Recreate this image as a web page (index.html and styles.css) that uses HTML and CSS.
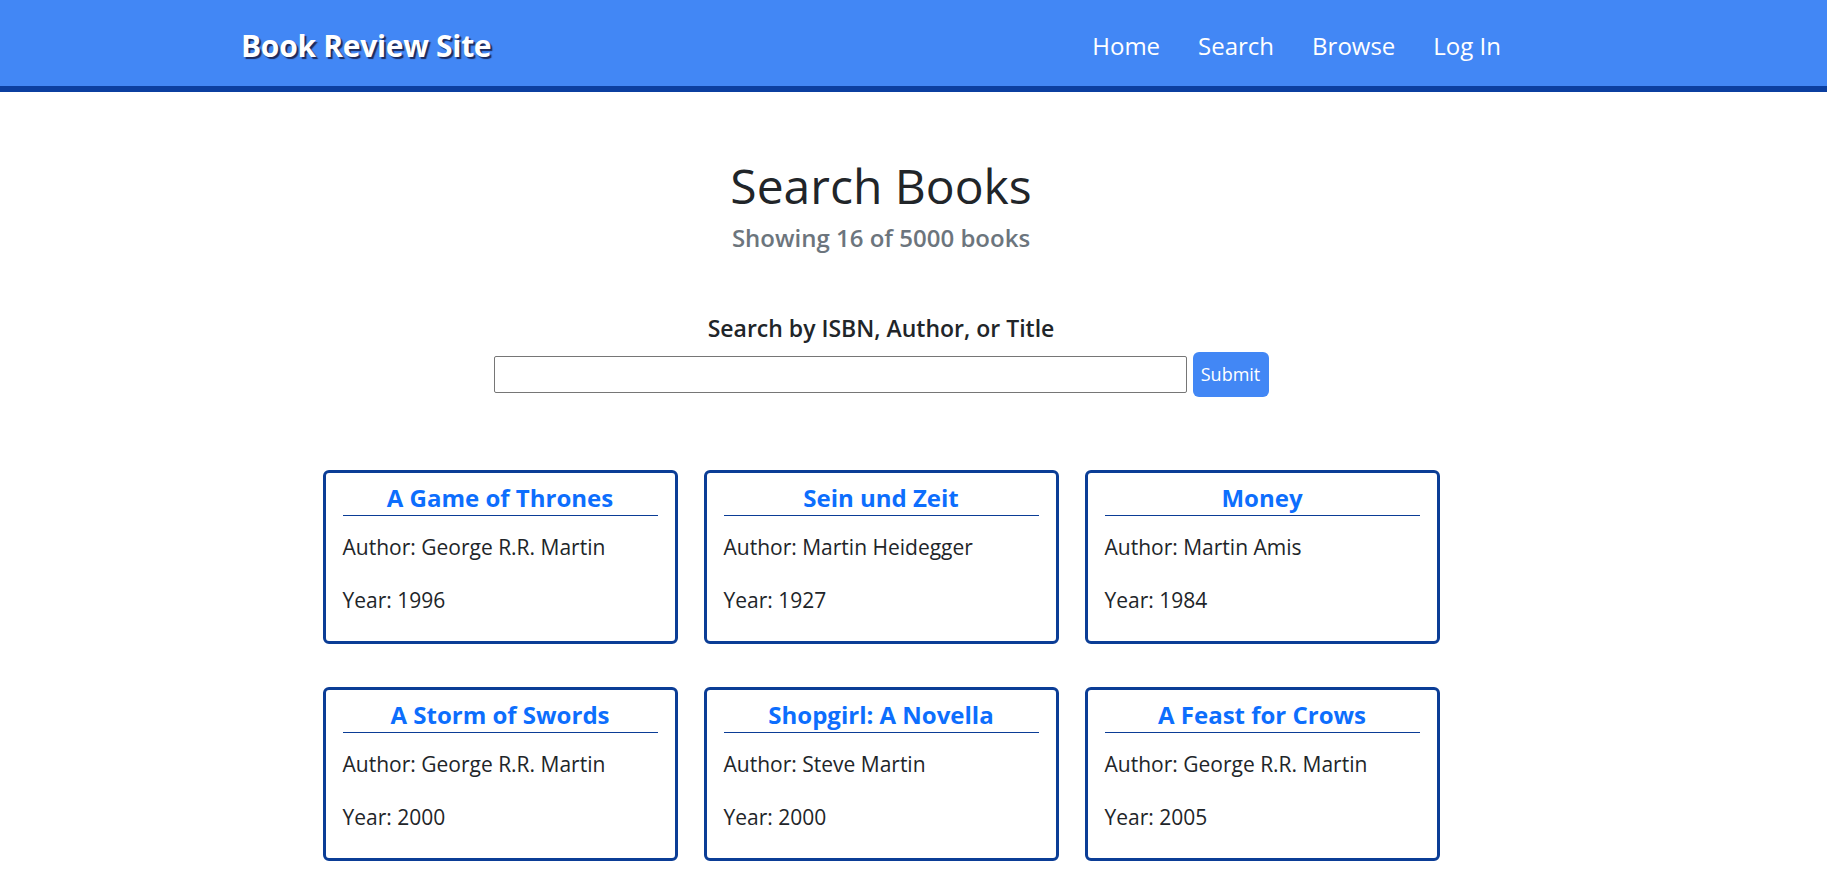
FILE: index.html
```html
<!DOCTYPE html>
<html lang="en">
<head>
<meta charset="utf-8">
<title>Search Books - Book Review Site</title>
<link rel="stylesheet" href="styles.css">
</head>
<body>
<header class="navbar">
  <div class="container nav-inner">
    <a class="brand" href="#">Book Review Site</a>
    <nav class="nav-links">
      <a href="#">Home</a>
      <a href="#">Search</a>
      <a href="#">Browse</a>
      <a href="#">Log In</a>
    </nav>
  </div>
</header>
<main class="container main">
  <h1 class="title">Search Books</h1>
  <p class="subtitle">Showing 16 of 5000 books</p>
  <form class="search-form">
    <label class="search-label" for="q">Search by ISBN, Author, or Title</label>
    <div class="search-row">
      <input id="q" class="search-input" type="text">
      <button class="btn-submit" type="button">Submit</button>
    </div>
  </form>
  <section class="book-grid">
    <article class="book-card">
      <h2 class="book-title"><a href="#">A Game of Thrones</a></h2>
      <p class="book-meta">Author: George R.R. Martin</p>
      <p class="book-meta">Year: 1996</p>
    </article>
    <article class="book-card">
      <h2 class="book-title"><a href="#">Sein und Zeit</a></h2>
      <p class="book-meta">Author: Martin Heidegger</p>
      <p class="book-meta">Year: 1927</p>
    </article>
    <article class="book-card">
      <h2 class="book-title"><a href="#">Money</a></h2>
      <p class="book-meta">Author: Martin Amis</p>
      <p class="book-meta">Year: 1984</p>
    </article>
    <article class="book-card">
      <h2 class="book-title"><a href="#">A Storm of Swords</a></h2>
      <p class="book-meta">Author: George R.R. Martin</p>
      <p class="book-meta">Year: 2000</p>
    </article>
    <article class="book-card">
      <h2 class="book-title"><a href="#">Shopgirl: A Novella</a></h2>
      <p class="book-meta">Author: Steve Martin</p>
      <p class="book-meta">Year: 2000</p>
    </article>
    <article class="book-card">
      <h2 class="book-title"><a href="#">A Feast for Crows</a></h2>
      <p class="book-meta">Author: George R.R. Martin</p>
      <p class="book-meta">Year: 2005</p>
    </article>
  </section>
</main>
</body>
</html>
```

FILE: styles.css
```css
* { box-sizing: border-box; }

html, body {
  margin: 0;
  padding: 0;
  background: #ffffff;
  color: #212529;
  font-family: "Open Sans", "Noto Sans", "Liberation Sans", sans-serif;
}

.container {
  box-sizing: content-box;
  width: 1280px;
  padding-right: 65px;
  margin: 0 auto;
}

/* Navbar */
.navbar {
  background: #4287f5;
  border-bottom: 6px solid #0b3fa0;
  height: 92px;
}

.nav-inner {
  display: flex;
  align-items: center;
  justify-content: space-between;
  height: 86px;
  padding-top: 2px;
}

.brand {
  color: #ffffff;
  text-decoration: none;
  font-weight: 700;
  font-size: 30px;
  letter-spacing: -0.3px;
  text-shadow: 2px 2px 1px #1c2b5e;
}

.nav-links {
  display: flex;
}

.nav-links a {
  color: #ffffff;
  text-decoration: none;
  font-size: 24px;
  padding: 0 19px;
}

.nav-links a:last-child {
  padding-right: 20px;
}

/* Main */
.main {
  display: flex;
  flex-direction: column;
  align-items: center;
  text-align: center;
}

.title {
  margin: 65px 0 0;
  font-size: 48px;
  font-weight: 500;
  line-height: 1.2;
  color: #212529;
}

.subtitle {
  margin: 10px 0 0;
  font-size: 24px;
  font-weight: 600;
  line-height: 25px;
  color: #6c757d;
}

.search-form {
  margin-top: 63px;
  display: flex;
  flex-direction: column;
  align-items: center;
}

.search-label {
  font-size: 23px;
  font-weight: 600;
  line-height: 30px;
  color: #212529;
}

.search-row {
  margin-top: 9px;
  display: flex;
  align-items: center;
  gap: 6px;
}

.search-input {
  width: 693px;
  height: 37px;
  border: 1px solid #767676;
  border-radius: 2px;
  font-family: inherit;
  font-size: 16px;
  padding: 1px 4px;
  background: #fff;
}

.btn-submit {
  width: 76px;
  height: 45px;
  border: none;
  border-radius: 6px;
  background: #4287f5;
  color: #ffffff;
  font-family: inherit;
  font-size: 18px;
  padding: 0;
}

/* Cards */
.book-grid {
  margin-top: 73px;
  display: grid;
  grid-template-columns: repeat(3, 355px);
  column-gap: 26px;
  row-gap: 43px;
}

.book-card {
  border: 3px solid #0b3d96;
  border-radius: 6px;
  padding: 12px 17px 26px;
  text-align: left;
}

.book-title {
  margin: 0;
  padding-bottom: 4px;
  border-bottom: 1px solid #0b3d96;
  text-align: center;
  font-size: 24px;
  font-weight: 700;
  line-height: 26px;
}

.book-title a {
  color: #0d6efd;
  text-decoration: none;
}

.book-meta {
  margin: 16px 0 0;
  font-size: 21px;
  line-height: 30px;
  color: #212529;
}

.book-meta + .book-meta {
  margin-top: 23px;
}
```
